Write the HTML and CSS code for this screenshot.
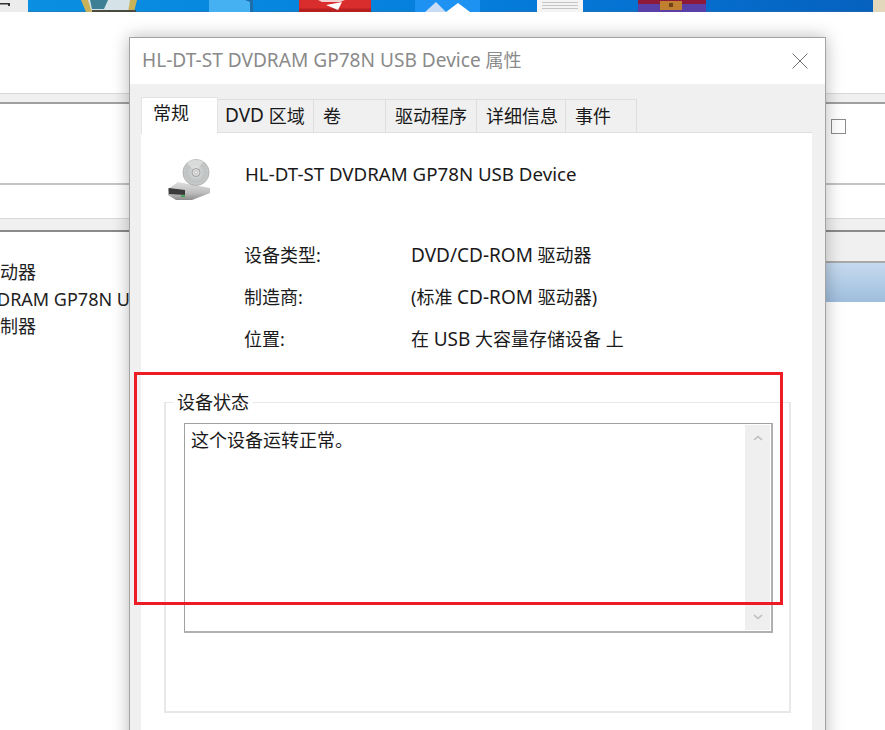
FILE: index.html
```html
<!DOCTYPE html>
<html lang="en">
<head>
    <meta charset="UTF-8">
    <meta name="viewport" content="width=device-width, initial-scale=1.0">
    <title>HL-DT-ST DVDRAM GP78N USB Device 属性</title>
    <link rel="stylesheet" href="styles.css">
</head>
<body>
    <!-- desktop icons cut off along the top -->
    <svg class="taskbar" viewBox="0 0 885 12">
        <defs>
            <linearGradient id="barFill" x1="0" y1="0" x2="1" y2="0">
                <stop offset="0" stop-color="#0a90e2"></stop>
                <stop offset="0.5" stop-color="#0580dc"></stop>
                <stop offset="0.75" stop-color="#0570d0"></stop>
                <stop offset="1" stop-color="#0660bd"></stop>
            </linearGradient>
        </defs>
        <rect width="885" height="12" fill="url(#barFill)"></rect>
        <rect y="11.500" width="885" height="0.500" fill="#3c6e96"></rect>
        <rect width="28" height="12" fill="#ececec"></rect>
        <path d="M0 3H10V6H8V4.500H0Z" fill="#333"></path>
        <path d="M81 0H137L134 12H86Z" fill="#c9b25a"></path>
        <path d="M88 0H130L128 12H92Z" fill="#d5e3e8"></path>
        <path d="M90 0H108L104 9H92Z" fill="#3f7f96"></path>
        <rect x="92" y="10" width="44" height="2" fill="#4a4a40"></rect>
        <rect x="209" width="44" height="12" fill="#45b1f3"></rect>
        <path d="M245 0H253V12H250V2Z" fill="#1d6ea8"></path>
        <rect x="299" width="72" height="12" fill="#d92c2c"></rect>
        <rect x="299" y="8.500" width="72" height="3.500" fill="#b81f1f"></rect>
        <path d="M326 5L342 2L338 10Z" fill="#fff"></path>
        <path d="M318 0H345L340 2H322Z" fill="#f2d0d0"></path>
        <rect x="415" width="65" height="12" fill="#1d92f2"></rect>
        <path d="M425 12L436 2L446 12Z" fill="#c9dcf5"></path>
        <path d="M446 12L458 3L470 12Z" fill="#fff"></path>
        <rect x="537" width="46" height="12" fill="#f4f4f4"></rect>
        <path d="M542 2.500H578M542 5.500H578M542 8.500H578" stroke="#c4c4c4" stroke-width="1"></path>
        <rect x="638" width="68" height="12" fill="#5a40a6"></rect>
        <rect x="638" width="68" height="4" fill="#8e1a3a"></rect>
        <rect x="660" y="1" width="22" height="9" fill="#c08030"></rect>
        <rect x="669" y="3" width="4" height="4" fill="#6d4216"></rect>
        <rect x="873" width="12" height="12" fill="#e4d8bc"></rect>
    </svg>

    <!-- device manager window behind the dialog -->
    <div class="back-window">
        <div class="band band-menu"></div>
        <div class="band-line band-toolbar"></div>
        <div class="band band-header"></div>
        <div class="tree">
            <div>动器</div>
            <div class="tree-long">DRAM GP78N U</div>
            <div>制器</div>
        </div>
        <span class="back-check"></span>
        <div class="back-row"></div>
        <div class="back-selected"></div>
    </div>

    <div class="dialog">
        <div class="titlebar">
            <span class="title"><span class="latin">HL-DT-ST DVDRAM GP78N USB Device</span> 属性</span>
            <svg class="close-icon" viewBox="0 0 16 16">
                <path d="M0.5 0.500L15.500 15.500M15.500 0.500L0.500 15.500" stroke="#707070" stroke-width="1" fill="none"></path>
            </svg>
        </div>
        <div class="dialog-body">
            <ul class="tabs">
                <li class="tab tab-active">常规</li>
                <li class="tab tab-dvd"><span class="latin">DVD</span>&nbsp;区域</li>
                <li class="tab tab-vol">卷</li>
                <li class="tab tab-driver">驱动程序</li>
                <li class="tab tab-details">详细信息</li>
                <li class="tab tab-events">事件</li>
            </ul>
            <div class="panel">
                <div class="device-head">
                    <svg class="device-icon" viewBox="0 0 44 44">
                        <defs>
                            <radialGradient id="discFill" cx="0.5" cy="0.5" r="0.6">
                                <stop offset="0" stop-color="#dfe1e1"></stop>
                                <stop offset="0.6" stop-color="#bfc2c2"></stop>
                                <stop offset="1" stop-color="#d4d4d4"></stop>
                            </radialGradient>
                            <linearGradient id="driveTop" x1="0" y1="0" x2="0" y2="1">
                                <stop offset="0" stop-color="#dedede"></stop>
                                <stop offset="0.6" stop-color="#bdbdbd"></stop>
                                <stop offset="1" stop-color="#8c8c8c"></stop>
                            </linearGradient>
                        </defs>
                        <path d="M2 32L12 25L44 31V36L26 43H10L2 38Z" fill="url(#driveTop)"></path>
                        <path d="M2.500 31L19 33V38L3 37Z" fill="#3a3a3a"></path>
                        <rect x="15" y="38.500" width="4" height="1.500" fill="#2f9e44"></rect>
                        <circle cx="30" cy="15.500" r="13" fill="url(#discFill)" stroke="#a4a6a6" stroke-width="0.800"></circle>
                        <path d="M30 15.500L21 6A13 13 0 0 1 37 4.500Z" fill="#f0f0f0" opacity="0.500"></path>
                        <circle cx="30" cy="15.500" r="4" fill="#dedede" stroke="#8f8f8f" stroke-width="0.800"></circle>
                        <circle cx="30" cy="15.500" r="1.400" fill="#fff" stroke="#999" stroke-width="0.600"></circle>
                    </svg>
                    <span class="device-name">HL-DT-ST DVDRAM GP78N USB Device</span>
                </div>
                <dl class="props">
                    <div class="prop"><dt>设备类型:</dt><dd><span class="latin">DVD/CD-ROM</span> 驱动器</dd></div>
                    <div class="prop"><dt>制造商:</dt><dd>(标准 <span class="latin">CD-ROM</span> 驱动器)</dd></div>
                    <div class="prop"><dt>位置:</dt><dd>在 <span class="latin">USB</span> 大容量存储设备 上</dd></div>
                </dl>
                <fieldset class="status-group">
                    <legend>设备状态</legend>
                    <div class="status-box">
                        <div class="status-text">这个设备运转正常。</div>
                        <div class="scrollbar">
                            <svg viewBox="0 0 10 6"><path d="M1 5L5 1.500L9 5" stroke="#bdbdbd" stroke-width="1.600" fill="none"></path></svg>
                            <svg viewBox="0 0 10 6"><path d="M1 1L5 4.500L9 1" stroke="#bdbdbd" stroke-width="1.600" fill="none"></path></svg>
                        </div>
                    </div>
                </fieldset>
            </div>
        </div>
    </div>

    <!-- red annotation rectangle on top of the screenshot -->
    <div class="highlight"></div>
</body>
</html>
```

FILE: styles.css
```css
* {
    margin: 0;
    padding: 0;
    box-sizing: border-box;
}

html, body {
    width: 885px;
    height: 730px;
    overflow: hidden;
}

body {
    position: relative;
    background-color: #fff;
    font-family: "Noto Sans", "Noto Sans CJK SC", "Liberation Sans", sans-serif;
    color: #1a1a1a;
}

/* latin runs sit a little wider than the cjk around them */
.latin {
    font-size: 19px;
}

/* top strip */
.taskbar {
    position: absolute;
    top: 0;
    left: 0;
    display: block;
    width: 885px;
    height: 12px;
}

/* window behind */
.back-window {
    position: absolute;
    top: 0;
    left: 0;
    width: 885px;
    height: 730px;
}

.band {
    position: absolute;
    left: 0;
    width: 885px;
    background-color: #f0f0f0;
    border-top: 1px solid #d9d9d9;
    border-bottom: 2px solid #a0a0a0;
}

.band-menu {
    top: 93px;
    height: 11px;
}

.band-header {
    top: 218px;
    height: 14px;
    border-bottom: 2px solid #8a8a8a;
}

.band-line {
    position: absolute;
    left: 0;
    width: 885px;
    height: 2px;
    background-color: #c4c4c4;
}

.band-toolbar {
    top: 183px;
}

.tree {
    position: absolute;
    top: 259px;
    left: 0;
    width: 130px;
    overflow: hidden;
    font-size: 18px;
    line-height: 27px;
    white-space: nowrap;
    color: #222;
}

.tree-long {
    margin-left: -3px;
}

.back-check {
    position: absolute;
    top: 119px;
    left: 831px;
    width: 15px;
    height: 15px;
    background-color: #fff;
    border: 1px solid #8a8a8a;
}

.back-row {
    position: absolute;
    top: 232px;
    left: 826px;
    width: 59px;
    height: 31px;
    background-color: #f0f0f0;
    border-bottom: 2px solid #a8a8a8;
}

.back-selected {
    position: absolute;
    top: 263px;
    left: 826px;
    width: 59px;
    height: 39px;
    background: linear-gradient(180deg, #c6daef 0%, #9fbedd 100%);
}

/* properties dialog */
.dialog {
    position: absolute;
    top: 37px;
    left: 129px;
    width: 697px;
    height: 720px;
    background-color: #f0f0f0;
    border: 1px solid #a3a3a3;
    box-shadow: 0 0 16px rgba(0, 0, 0, 0.28);
}

.titlebar {
    display: flex;
    align-items: center;
    justify-content: space-between;
    height: 46px;
    padding: 0 17px 0 12px;
    background-color: #fff;
}

.title {
    padding-bottom: 4px;
    font-size: 18px;
    color: #8a8a8a;
    white-space: nowrap;
}

.title .latin {
    font-size: 19.1px;
}

.close-icon {
    width: 16px;
    height: 16px;
}

.dialog-body {
    padding: 13px 13px 0 11px;
}

.tabs {
    display: flex;
    align-items: flex-end;
    height: 35px;
    list-style: none;
}

.tab {
    display: flex;
    align-items: center;
    height: 33px;
    padding-left: 7px;
    padding-bottom: 2px;
    font-size: 18px;
    white-space: nowrap;
    background-color: #f0f0f0;
    border: 1px solid #dedede;
    border-left: none;
    border-bottom: none;
}

.tab-active {
    position: relative;
    z-index: 1;
    width: 77px;
    height: 37px;
    margin-bottom: -2px;
    padding-left: 11px;
    padding-bottom: 8px;
    background-color: #fff;
    border: 1px solid #e4e4e4;
    border-bottom: none;
}

.tab-dvd { width: 96px; }
.tab-vol { width: 72px; padding-left: 9px; }
.tab-driver { width: 91px; padding-left: 9px; }
.tab-details { width: 89px; padding-left: 9px; }
.tab-events { width: 71px; padding-left: 9px; }

.panel {
    height: 620px;
    padding: 0 23px;
    background-color: #fff;
    border-top: 1px solid #dedede;
}

.device-head {
    display: flex;
    align-items: flex-start;
    height: 109px;
    padding-top: 28px;
}

.device-icon {
    flex-shrink: 0;
    width: 44px;
    height: 44px;
    margin-left: 2px;
    margin-top: -4px;
}

.device-name {
    margin-left: 35px;
    font-size: 18.7px;
    line-height: 26px;
    white-space: nowrap;
}

.props {
    margin-left: 80px;
}

.prop {
    display: flex;
    height: 42px;
    font-size: 18px;
    line-height: 26px;
    white-space: nowrap;
}

.prop dt {
    width: 167px;
}

.status-group {
    width: 625px;
    height: 324px;
    margin-top: 21px;
    padding: 0 16px 0 18px;
    border: 1px solid #e8e8e8;
    border-width: 1px 2px 2px 2px;
}

.status-group legend {
    margin-left: -11px;
    padding: 0 4px;
    font-size: 18px;
    line-height: 26px;
}

.status-box {
    display: flex;
    justify-content: space-between;
    width: 589px;
    height: 210px;
    margin-top: 8px;
    padding: 1px;
    background-color: #fff;
    border-style: solid;
    border-color: #a0a0a0 #b0b0b0 #b0b0b0 #a0a0a0;
    border-width: 1px 2px 2px 1px;
}

.status-text {
    padding: 2px 0 0 5px;
    font-size: 18px;
    line-height: 26px;
}

.scrollbar {
    display: flex;
    flex-direction: column;
    justify-content: space-between;
    align-items: center;
    width: 25px;
    padding: 10px 0;
    background-color: #efefef;
}

.scrollbar svg {
    width: 10px;
    height: 6px;
}

/* annotation */
.highlight {
    position: absolute;
    top: 372px;
    left: 134px;
    width: 649px;
    height: 233px;
    border: 3px solid #ed1c24;
}
```
